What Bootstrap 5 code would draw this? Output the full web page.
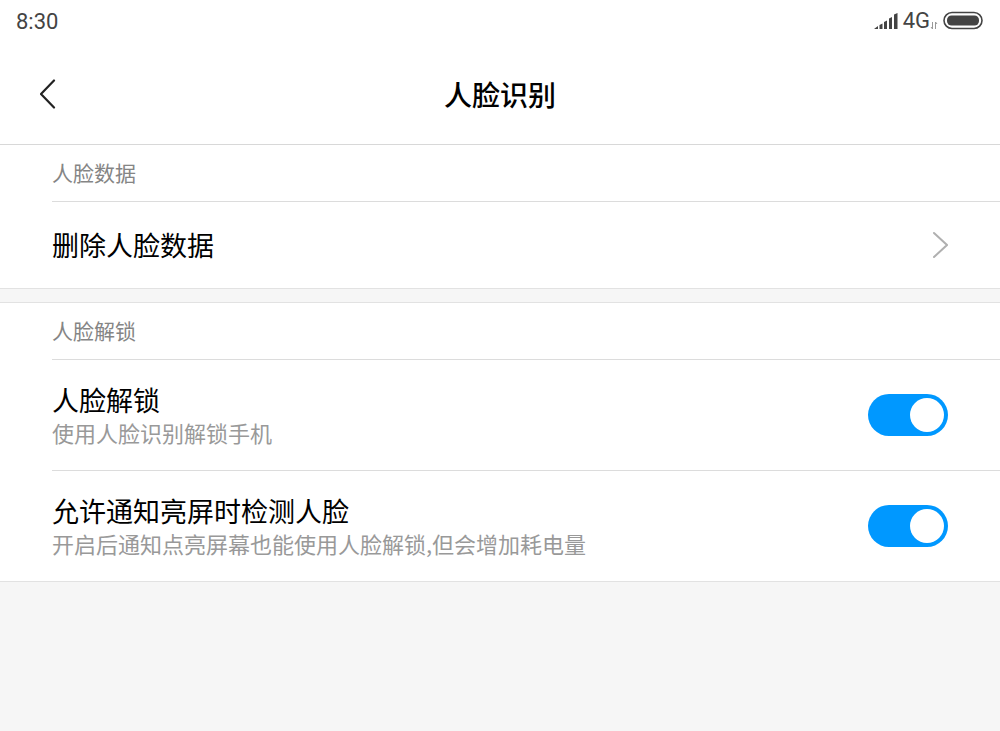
<!DOCTYPE html>
<html lang="zh-CN">
<head>
<meta charset="utf-8">
<meta name="viewport" content="width=device-width, initial-scale=1">
<title>人脸识别</title>
<link href="https://cdn.jsdelivr.net/npm/bootstrap@5.3.0/dist/css/bootstrap.min.css" rel="stylesheet">
<style>
  body { background: #f6f6f6; color: #000; font-family: "Noto Sans CJK SC", sans-serif; }
  .status-bar { height: 44px; color: #444; font-family: Roboto, "Noto Sans CJK SC", sans-serif; font-size: 22px; line-height: 44px; }
  .status-icons { height: 42px; }
  .title-bar { display: grid; grid-template-columns: 1fr auto 1fr; height: 101px; border-bottom: 1px solid #d8d8d8; }
  .title-bar h1 { font-size: 28px; font-weight: 500; line-height: 40px; }
  .settings-group { border-bottom: 1px solid #e2e2e2; }
  .settings-group + .settings-group { margin-top: 13px; border-top: 1px solid #e2e2e2; }
  .settings-line { margin-left: 52px; padding-right: 52px; }
  .settings-line + .settings-line { border-top: 1px solid #dcdcdc; }
  .group-label { height: 56px; color: #858585; font-size: 21px; font-weight: 400; line-height: 54px; }
  .row-link { height: 87px; color: #000; }
  .row-switch { height: 111px; }
  .item-title { font-size: 27px; line-height: 34px; }
  .item-note { color: #999; font-size: 22px; line-height: 30px; }
  .toggle.form-check-input {
    width: 80px; height: 42px; margin: 0; border: 0; border-radius: 21px; background-size: 80px 42px;
    background-image: url("data:image/svg+xml,%3csvg xmlns='http://www.w3.org/2000/svg' viewBox='0 0 80 42'%3e%3ccircle cx='21' cy='21' r='17' fill='%23fff'/%3e%3c/svg%3e");
    background-color: #ccc;
  }
  .toggle.form-check-input:checked {
    background-color: #0098ff;
    background-image: url("data:image/svg+xml,%3csvg xmlns='http://www.w3.org/2000/svg' viewBox='0 0 80 42'%3e%3ccircle cx='59' cy='21' r='17' fill='%23fff'/%3e%3c/svg%3e");
  }
</style>
</head>
<body>
<div class="bg-white">
  <div class="status-bar d-flex justify-content-between px-3">
    <span>8:30</span>
    <div class="status-icons d-flex align-items-center">
      <svg width="26" height="20" viewBox="0 0 26 20" fill="#444" aria-hidden="true">
        <path d="M1 18l4-3v3zM6.500 14l3-1.500V18h-3zM11 11l3-1.500V18h-3zM16 7.500l3-1.500v12h-3zM21 3.500l3.500-1.500v16H21z"/>
      </svg>
      <span class="ms-1">4G</span>
      <svg width="8" height="20" viewBox="0 0 8 20" fill="none" stroke="#999" aria-hidden="true">
        <path d="M2.500 11v7M1 16l1.500 2M5.500 18v-7M7 13l-1.500-2"/>
      </svg>
      <svg class="ms-1" width="42" height="20" viewBox="0 0 42 20" aria-hidden="true">
        <rect x="2" y="1.500" width="38" height="16" rx="8" fill="none" stroke="#444" stroke-width="1.600"/>
        <rect x="5" y="4.500" width="32" height="10" rx="4.500" fill="#444"/>
      </svg>
    </div>
  </div>
  <header class="title-bar align-items-center">
    <div class="ps-4">
      <button type="button" class="btn border-0 d-flex py-2 px-3" aria-label="返回">
        <svg width="16" height="30" viewBox="0 0 16 30" fill="none" stroke="#222" stroke-width="2.200" stroke-linecap="round" stroke-linejoin="round" aria-hidden="true">
          <path d="M14 1.500L1 15l13 13.500"/>
        </svg>
      </button>
    </div>
    <h1 class="m-0">人脸识别</h1>
  </header>
</div>
<main>
  <section class="settings-group bg-white">
    <h2 class="settings-line group-label mb-0">人脸数据</h2>
    <a href="#" class="settings-line row-link d-flex align-items-center justify-content-between text-decoration-none">
      <span class="item-title">删除人脸数据</span>
      <svg width="16" height="28" viewBox="0 0 16 28" fill="none" stroke="#b0b0b0" stroke-width="2" stroke-linecap="round" aria-hidden="true">
        <path d="M2 2l13 12L2 26"/>
      </svg>
    </a>
  </section>
  <section class="settings-group bg-white">
    <h2 class="settings-line group-label mb-0">人脸解锁</h2>
    <div class="settings-line row-switch d-flex align-items-center justify-content-between">
      <label for="unlock">
        <span class="item-title d-block">人脸解锁</span>
        <span class="item-note d-block">使用人脸识别解锁手机</span>
      </label>
      <div class="form-switch p-0 d-flex">
        <input class="form-check-input toggle" type="checkbox" role="switch" id="unlock" checked>
      </div>
    </div>
    <div class="settings-line row-switch d-flex align-items-center justify-content-between">
      <label for="notify">
        <span class="item-title d-block">允许通知亮屏时检测人脸</span>
        <span class="item-note d-block">开启后通知点亮屏幕也能使用人脸解锁,但会增加耗电量</span>
      </label>
      <div class="form-switch p-0 d-flex">
        <input class="form-check-input toggle" type="checkbox" role="switch" id="notify" checked>
      </div>
    </div>
  </section>
</main>
<script src="https://cdn.jsdelivr.net/npm/bootstrap@5.3.0/dist/js/bootstrap.bundle.min.js"></script>
</body>
</html>
